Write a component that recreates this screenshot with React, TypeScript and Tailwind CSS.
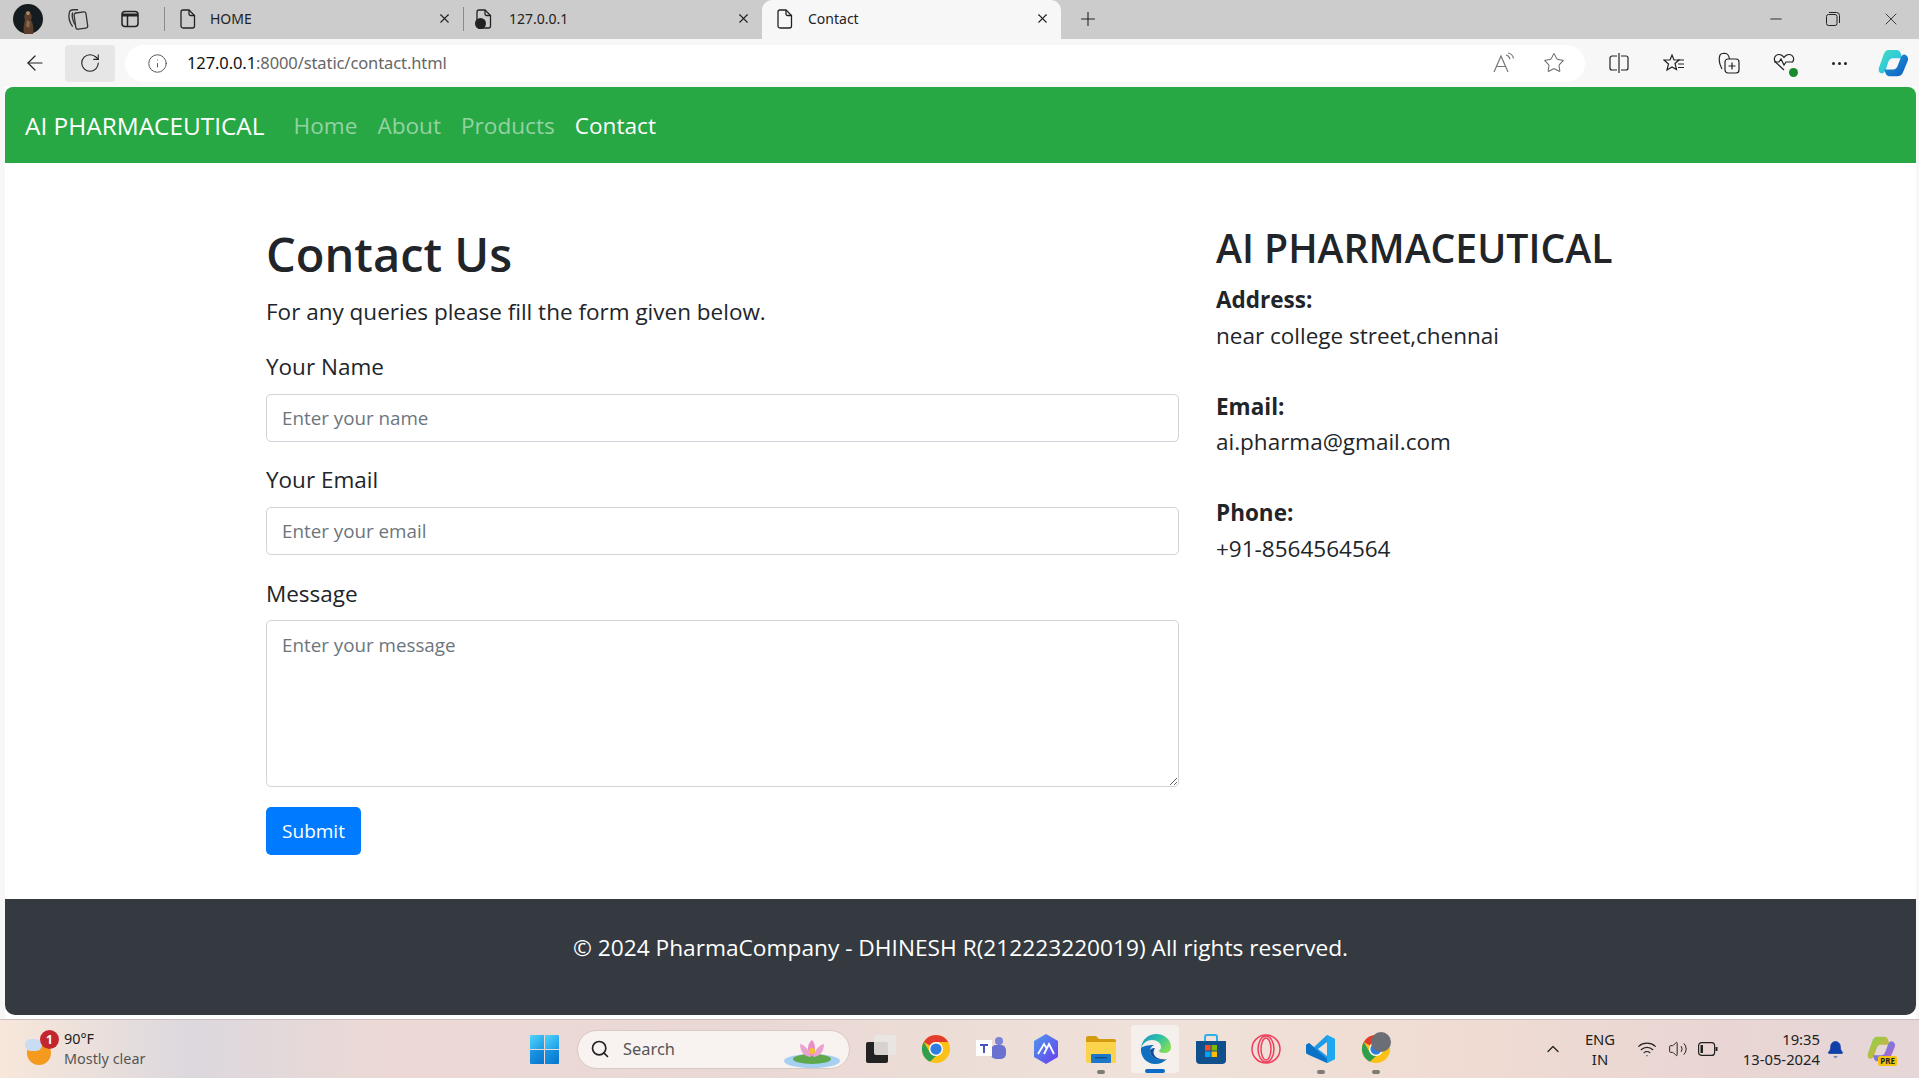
import { ArrowLeft, Bell, ChevronUp, Info, Minus, Plus, RotateCw, Search, Star, Volume2, Wifi, X } from "lucide-react";

const UI = "font-['Noto_Sans',sans-serif]";

function FileIcon() {
  return (
    <svg width="16" height="20" viewBox="0 0 16 20" fill="none" stroke="#222" strokeWidth="1.3">
      <path d="M3 1h6l5.500 5.500V17a2 2 0 0 1-2 2H3a2 2 0 0 1-2-2V3a2 2 0 0 1 2-2z" />
      <path d="M9 1v4a1.500 1.500 0 0 0 1.500 1.500h4" />
    </svg>
  );
}

function ChromeLogo({ size }: { size: number }) {
  return (
    <svg width={size} height={size} viewBox="0 0 32 32">
      <circle cx="16" cy="16" r="15" fill="#fbc116" />
      <path d="M16 1a15 15 0 0 1 13 7.500H16a7.500 7.500 0 0 0-6.500 3.750L3 8.500A15 15 0 0 1 16 1z" fill="#e33b2e" />
      <path d="M3 8.500l6.500 11.250A7.500 7.500 0 0 0 16 23.500L9.500 29.500A15 15 0 0 1 3 8.500z" fill="#2f9e4f" />
      <circle cx="16" cy="16" r="7.500" fill="#fff" />
      <circle cx="16" cy="16" r="6" fill="#2f7de1" />
    </svg>
  );
}

function EdgeLogo() {
  return (
    <svg width="32" height="32" viewBox="0 0 32 32">
      <defs>
        <linearGradient id="edgeTop" x1="0" y1="0" x2="1" y2="0.6">
          <stop offset="0" stopColor="#1a8fc9" />
          <stop offset="0.55" stopColor="#2fc3a5" />
          <stop offset="1" stopColor="#7fdc5a" />
        </linearGradient>
      </defs>
      <path d="M1 15C2 6 9 1 16 1c9 0 15 6 15 13 0 4-3 6-7 6-3 0-5-1-5-2 0-1 2-1 2-4 0-4-4-7-9-7-5 0-9 3-11 8z" fill="url(#edgeTop)" />
      <path d="M1 15c-1 9 6 16 14 16 5 0 9-2 12-5-2 1-4 1-6 1-6 0-11-4-11-9 0-3 2-5 4-6-6 0-11 1-13 3z" fill="#0f6fc0" />
      <path d="M10 18c0 5 5 9 11 9 2 0 4 0 6-1-3 1-10 0-12-3-2-2-2-5 0-8-3 0-5 1-5 3z" fill="#0a4f9a" />
    </svg>
  );
}

function WinLogo() {
  return (
    <svg width="29" height="29" viewBox="0 0 29 29">
      <defs>
        <linearGradient id="winA" x1="0" y1="0" x2="1" y2="1">
          <stop offset="0" stopColor="#52d4fb" />
          <stop offset="1" stopColor="#1a9ae6" />
        </linearGradient>
        <linearGradient id="winB" x1="0" y1="0" x2="1" y2="1">
          <stop offset="0" stopColor="#1c9be6" />
          <stop offset="1" stopColor="#0674ce" />
        </linearGradient>
      </defs>
      <path d="M1 0h13v14H0V1a1 1 0 0 1 1-1z" fill="url(#winA)" />
      <path d="M15 0h13a1 1 0 0 1 1 1v13H15z" fill="url(#winA)" />
      <path d="M0 15h14v14H1a1 1 0 0 1-1-1z" fill="url(#winB)" />
      <path d="M15 15h14v13a1 1 0 0 1-1 1H15z" fill="url(#winB)" />
    </svg>
  );
}

function CopilotLogo({ size, id, tone }: { size: number; id: string; tone: string[] }) {
  return (
    <svg width={size} height={size} viewBox="0 0 32 32">
      <defs>
        <linearGradient id={`${id}A`} x1="0" y1="0" x2="1" y2="1">
          <stop offset="0" stopColor={tone[0]} />
          <stop offset="1" stopColor={tone[1]} />
        </linearGradient>
        <linearGradient id={`${id}B`} x1="0" y1="0" x2="1" y2="1">
          <stop offset="0" stopColor={tone[2]} />
          <stop offset="1" stopColor={tone[3]} />
        </linearGradient>
      </defs>
      <path d="M11 2h9c2 0 3 1 4 3l2 6H16c-3 0-4 2-5 4l-3 9c-1 2-2 3-4 3-2 0-4-2-3-6L6 7c1-3 3-5 5-5z" fill={`url(#${id}B)`} />
      <path d="M21 30h-9c-2 0-3-1-4-3l-1-4h9c3 0 4-2 5-4l3-8c1-2 2-4 4-4s5 3 4 6l-5 12c-1 3-3 5-6 5z" fill={`url(#${id}A)`} />
    </svg>
  );
}

function TaskIcon({ children, active, dot }: { children: React.ReactNode; active?: boolean; dot?: boolean }) {
  return (
    <div className="relative flex h-[48px] w-[55px] shrink-0 items-center justify-center">
      {active && <div className="absolute left-[3px] top-0 h-[48px] w-[48px] rounded-[4px] bg-[#f5f0ec]" />}
      <div className="relative flex items-center justify-center">{children}</div>
      {dot && <div className="absolute bottom-[-1px] left-[24px] h-[4px] w-[8px] rounded-full bg-[#7d7a78]" />}
      {active && <div className="absolute bottom-[0px] left-[17px] h-[4px] w-[20px] rounded-full bg-[#0a6cc8]" />}
    </div>
  );
}

export default function App() {
  return (
    <div className={`flex h-[1078px] w-[1919px] flex-col overflow-hidden bg-[#f7f7f7] ${UI}`}>
      {/* tab strip */}
      <div className="flex h-[39px] shrink-0 items-center bg-[#cccccc] pb-[2px] text-[14px] text-[#222]">
        <div className="flex w-[56px] justify-center">
          <svg width="30" height="30" viewBox="0 0 30 30">
            <circle cx="15" cy="15" r="15" fill="#141c20" />
            <path d="M11 30c-1-6 0-11 1-14-1-2-1-4 0-6 1-3 5-3 6 0 1 2 1 4 0 6 2 3 3 8 2 14z" fill="#5b3f2c" />
            <path d="M13 8c1-1 3-1 4 0l-1 3h-2z" fill="#b08a68" />
            <path d="M14 16l3 2-1 6-3-2z" fill="#8a6a4c" />
          </svg>
        </div>
        <div className="flex w-[44px] justify-center pr-[3px]">
          <svg width="24" height="24" viewBox="0 0 22 22" fill="none" stroke="#333" strokeWidth="1.200">
            <rect x="9" y="5" width="11" height="15" rx="2" transform="rotate(-8 14 12)" />
            <path d="M7 18C4 14 3 9 4 5c.3-1.500 2-2.500 4-2.500h4" />
            <path d="M9 16C7 12 6 8 7 5" />
          </svg>
        </div>
        <div className="flex w-[60px] justify-center">
          <svg width="18" height="18" viewBox="0 0 18 18" fill="none" stroke="#222" strokeWidth="1.500">
            <rect x="1" y="1.500" width="16" height="15" rx="3" />
            <path d="M1 5h16" strokeWidth="3" />
            <path d="M6.500 5v11.500" />
          </svg>
        </div>
        <div className="ml-[4px] h-[24px] w-px bg-[#8a8a8a]" />
        <div className="flex w-[298px] items-center pl-[15px] pr-[11px]">
          <FileIcon />
          <span className="ml-[14px] flex-1">HOME</span>
          <X size={15} strokeWidth={1.700} />
        </div>
        <div className="h-[24px] w-px bg-[#8a8a8a]" />
        <div className="flex w-[298px] items-center pl-[12px] pr-[11px]">
          <div className="relative">
            <FileIcon />
            <div className="absolute bottom-[0px] left-[-1px] h-[11px] w-[11px] rounded-full bg-[#222]" />
          </div>
          <span className="ml-[17px] flex-1">127.0.0.1</span>
          <X size={15} strokeWidth={1.700} />
        </div>
        <div className="mb-[-2px] flex h-[39px] w-[299px] items-center self-end rounded-t-[10px] bg-[#f7f7f7] pb-[2px] pl-[15px] pr-[11px]">
          <FileIcon />
          <span className="ml-[15px] flex-1">Contact</span>
          <X size={15} strokeWidth={1.700} />
        </div>
        <Plus className="ml-[16px]" size={22} strokeWidth={1.200} />
        <div className="flex-1" />
        <Minus size={18} strokeWidth={1.200} className="mr-[41px]" />
        <svg width="14" height="14" viewBox="0 0 14 14" fill="none" stroke="#222" className="mr-[41px]">
          <rect x="0.500" y="2.500" width="10.500" height="11" rx="2" />
          <path d="M3 .500h7.500a3 3 0 0 1 3 3V11" />
        </svg>
        <X size={20} strokeWidth={1} className="mr-[18px]" />
      </div>

      {/* address bar row */}
      <div className="flex h-[48px] shrink-0 items-center text-[#222]">
        <div className="flex w-[65px] justify-center pl-[5px]">
          <ArrowLeft size={24} strokeWidth={1.200} />
        </div>
        <div className="flex h-[37px] w-[50px] items-center justify-center rounded-[4px] bg-[#e6e6e6]">
          <RotateCw size={22} strokeWidth={1.200} />
        </div>
        <div className="ml-[10px] flex h-[37px] w-[1460px] items-center rounded-full bg-white pl-[22px] pr-[20px]">
          <Info size={21} strokeWidth={1} color="#444" />
          <div className="ml-[19px] flex-1 text-[16.500px] tracking-[-0.1px] text-[#666]">
            <span className="text-[#111]">127.0.0.1</span>:8000/static/contact.html
          </div>
          <svg width="22" height="22" viewBox="0 0 22 22" fill="none" stroke="#777" strokeWidth="1.200" className="mr-[28px]">
            <path d="M1 20 8 4l7 16M3.500 14.500h9" />
            <path d="M13 3c2 .5 3.500 2 4 4M15 1c3 .5 5 3 5.500 5.500" />
          </svg>
          <Star size={22} strokeWidth={1.100} color="#666" />
        </div>
        <div className="flex flex-1 items-center pl-[24px]">
          <svg width="20" height="20" viewBox="0 0 20 20" fill="none" stroke="#222" strokeWidth="1.200">
            <path d="M8 3H3a2 2 0 0 0-2 2v10a2 2 0 0 0 2 2h5M12 3h5a2 2 0 0 1 2 2v10a2 2 0 0 1-2 2h-5M10 0v20" />
          </svg>
          <svg width="22" height="22" viewBox="0 0 22 22" fill="none" stroke="#222" strokeWidth="1.200" className="ml-[34px]">
            <path d="M9 3l2 5h5l-4 3.500 1.500 6L9 15l-5 3 1.500-6L1 8h6z" />
            <path d="M15 8h6M15 12h6M15 15.500h6" />
          </svg>
          <svg width="22" height="22" viewBox="0 0 22 22" fill="none" stroke="#222" strokeWidth="1.200" className="ml-[33px]">
            <rect x="7" y="7" width="14" height="14" rx="3" />
            <path d="M14 10.500v7M10.500 14h7" />
            <path d="M4 17C1 12 1 6 2 3c.5-1.500 4-2 6-1.500 2 .5 3 2.500 3.500 5.500" />
          </svg>
          <div className="relative ml-[33px] h-[22px] w-[22px]">
            <svg width="22" height="22" viewBox="0 0 22 22" fill="none" stroke="#222" strokeWidth="1.200">
              <path d="M11 18 2.500 10C0 7 2 2.500 6 2.500c2.500 0 4 1.500 5 3 1-1.500 2.500-3 5-3 4 0 6 4.500 3.500 7.500" />
              <path d="M1 10h5l2-3 3 6 2-3h7" />
            </svg>
            <div className="absolute bottom-[-3px] right-[-3px] h-[9px] w-[9px] rounded-full bg-[#1a8a2e]" />
          </div>
          <div className="ml-[37px] flex gap-[3px]">
            <div className="h-[3px] w-[3px] rounded-full bg-[#222]" />
            <div className="h-[3px] w-[3px] rounded-full bg-[#222]" />
            <div className="h-[3px] w-[3px] rounded-full bg-[#222]" />
          </div>
          <div className="ml-[31px]">
            <CopilotLogo size={30} id="copEdge" tone={["#1f9bd8", "#0f5cc0", "#3fe0c0", "#26b5f0"]} />
          </div>
        </div>
      </div>

      {/* page */}
      <div className="ml-[5px] mr-[3px] flex flex-1 flex-col bg-white font-['Open_Sans',sans-serif] text-[#212529]">
        <nav className="flex h-[76px] shrink-0 items-center rounded-t-[8px] bg-[#28a745] pl-[20px] pt-[2px] text-[24.400px]">
          <span className="text-white">AI PHARMACEUTICAL</span>
          <div className="ml-[29px] flex gap-[20px] text-[22.600px] text-[#93d3a2]">
            <span>Home</span>
            <span>About</span>
            <span>Products</span>
            <span className="text-white">Contact</span>
          </div>
        </nav>

        <main className="mx-auto flex h-[736px] w-[1425px] shrink-0 pt-[62px] text-[22.500px] leading-[30px]">
          <div className="w-[949px] px-[18px]">
            <h1 className="mb-[13px] mt-[-1px] text-[47px] font-semibold leading-[60px]">Contact Us</h1>
            <p className="mb-[25px]">For any queries please fill the form given below.</p>
            <label className="mb-[12px] block">Your Name</label>
            <input
              placeholder="Enter your name"
              className="mb-[23px] block h-[48px] w-full rounded-[5px] border border-[#ced4da] bg-white px-[15px] text-[18.800px] placeholder:text-[#6c757d]"
            />
            <label className="mb-[12px] block">Your Email</label>
            <input
              placeholder="Enter your email"
              className="mb-[24px] block h-[48px] w-full rounded-[5px] border border-[#ced4da] bg-white px-[15px] text-[18.800px] placeholder:text-[#6c757d]"
            />
            <label className="mb-[11px] block">Message</label>
            <textarea
              placeholder="Enter your message"
              className="mb-[20px] block h-[167px] w-full rounded-[5px] border border-[#ced4da] bg-white px-[15px] py-[9px] text-[18.800px] placeholder:text-[#6c757d]"
            />
            <button className="h-[48px] w-[95px] rounded-[5px] bg-[#007bff] text-[19px] text-white">Submit</button>
          </div>
          <div className="w-[476px] px-[19px]">
            <h2 className="mb-[10px] mt-[-1px] text-[39.200px] font-semibold leading-[48px]">AI PHARMACEUTICAL</h2>
            <p className="mb-[35.500px] leading-[35.500px]">
              <strong className="font-bold">Address:</strong>
              <br />
              near college street,chennai
            </p>
            <p className="mb-[35.500px] leading-[35.500px]">
              <strong className="font-bold">Email:</strong>
              <br />
              ai.pharma@gmail.com
            </p>
            <p className="leading-[35.500px]">
              <strong className="font-bold">Phone:</strong>
              <br />
              +91-8564564564
            </p>
          </div>
        </main>

        <footer className="flex h-[116px] shrink-0 items-start justify-center rounded-b-[10px] bg-[#343a40] pt-[31px] text-[22.700px] leading-[36px] text-white">
          © 2024 PharmaCompany - DHINESH R(212223220019) All rights reserved.
        </footer>
        <div className="flex-1" />
      </div>

      {/* windows taskbar */}
      <div className="flex h-[59px] shrink-0 items-center border-t border-[#c9c0bc] bg-[linear-gradient(90deg,#f8e7da_0%,#dcd8de_10%,#ecd9d5_20%,#ead8d4_40%,#efe2da_60%,#f0dcd2_75%,#e9d6d4_90%,#e6d6d8_100%)] text-[#222]">
        <div className="flex w-[517px] shrink-0 items-center pl-[24px]">
          <div className="relative h-[38px] w-[36px]">
            <div className="absolute bottom-[3px] left-[3px] h-[24px] w-[24px] rounded-full bg-[#f39a1f]" />
            <div className="absolute left-[1px] top-[9px] h-[12px] w-[17px] rounded-full bg-[#c9dcf4]" />
            <div className="absolute left-[16px] top-[0px] flex h-[19px] w-[19px] items-center justify-center rounded-full bg-[#c4262e] text-[12px] font-bold text-white">
              1
            </div>
          </div>
          <div className="ml-[4px] text-[14.400px] leading-[20px]">
            <div>90°F</div>
            <div className="text-[#555]">Mostly clear</div>
          </div>
        </div>
        <TaskIcon>
          <WinLogo />
        </TaskIcon>
        <div className="relative ml-[5px] flex h-[39px] w-[273px] shrink-0 items-center rounded-full border border-[#d8c8c4] bg-[#f8f2f0] pl-[12px]">
          <Search size={20} strokeWidth={2} color="#222" />
          <span className="ml-[13px] text-[16.400px] text-[#555]">Search</span>
          <svg width="58" height="30" viewBox="0 0 58 30" className="absolute bottom-[0px] right-[8px]">
            <ellipse cx="29" cy="23" rx="28" ry="7" fill="#a6d0f2" />
            <ellipse cx="29" cy="21" rx="19" ry="5" fill="#5fa84e" />
            <path d="M29 2c3 3 4 8 2 16h-5c-2-8-1-13 3-16z" fill="#e88fc6" />
            <path d="M17 6c5 1 9 6 11 13-6 0-11-5-11-13zM41 6c-5 1-9 6-11 13 6 0 11-5 11-13z" fill="#eaa2d0" />
            <circle cx="29" cy="13" r="3" fill="#f2c230" />
          </svg>
        </div>
        <div className="ml-[3px] flex items-center">
          <TaskIcon>
            <div className="relative h-[28px] w-[30px]">
              <div className="absolute bottom-0 left-0 h-[21px] w-[22px] rounded-[2px] bg-[#222]" />
              <div className="absolute right-0 top-0 h-[20px] w-[22px] rounded-[2px] bg-[#e9e5e3]/90" />
            </div>
          </TaskIcon>
          <TaskIcon>
            <ChromeLogo size={30} />
          </TaskIcon>
          <TaskIcon>
            <svg width="30" height="28" viewBox="0 0 30 28">
              <circle cx="23" cy="6" r="4" fill="#7b83d8" />
              <rect x="15" y="10" width="15" height="14" rx="5" fill="#6a72cf" />
              <rect x="0" y="5" width="16" height="16" fill="#fff" />
              <path d="M4 9h8v2H9v7H7v-7H4z" fill="#4b53bc" />
            </svg>
          </TaskIcon>
          <TaskIcon>
            <svg width="30" height="30" viewBox="0 0 30 30">
              <defs>
                <linearGradient id="hexA" x1="0" y1="0" x2="1" y2="1">
                  <stop offset="0" stopColor="#4c9bea" />
                  <stop offset="1" stopColor="#6a3cf0" />
                </linearGradient>
              </defs>
              <path d="M15 0l12 7v16l-12 7-12-7V7z" fill="url(#hexA)" />
              <path d="M7 20l6-10 3 5M13 20l5-10 5 10" fill="none" stroke="#fff" strokeWidth="1.800" />
            </svg>
          </TaskIcon>
          <TaskIcon dot>
            <svg width="30" height="28" viewBox="0 0 30 28">
              <path d="M0 3a2 2 0 0 1 2-2h8l3 3h15a2 2 0 0 1 2 2v4H0z" fill="#d49a10" />
              <path d="M0 7h30v19a2 2 0 0 1-2 2H2a2 2 0 0 1-2-2z" fill="#fbd34c" />
              <rect x="5" y="19" width="20" height="9" rx="1" fill="#1b78c8" />
              <rect x="9" y="22" width="12" height="1.500" fill="#0f4f90" />
            </svg>
          </TaskIcon>
          <TaskIcon active>
            <EdgeLogo />
          </TaskIcon>
          <TaskIcon>
            <svg width="30" height="30" viewBox="0 0 30 30">
              <path d="M9 7V3a2 2 0 0 1 2-2h8a2 2 0 0 1 2 2v4" fill="none" stroke="#2ab0ea" strokeWidth="2" />
              <path d="M0 7h30v19a4 4 0 0 1-4 4H4a4 4 0 0 1-4-4z" fill="#0f4f8c" />
              <rect x="9" y="11" width="5.500" height="5.500" fill="#f25022" />
              <rect x="15.500" y="11" width="5.500" height="5.500" fill="#7fba00" />
              <rect x="9" y="17.500" width="5.500" height="5.500" fill="#00a4ef" />
              <rect x="15.500" y="17.500" width="5.500" height="5.500" fill="#ffb900" />
            </svg>
          </TaskIcon>
          <TaskIcon>
            <svg width="30" height="30" viewBox="0 0 30 30" fill="none" stroke="#ef3e5c" strokeWidth="1.500">
              <circle cx="15" cy="15" r="14" />
              <ellipse cx="15" cy="15" rx="8" ry="13" />
              <ellipse cx="15" cy="15" rx="5" ry="11" />
            </svg>
          </TaskIcon>
          <TaskIcon dot>
            <svg width="30" height="30" viewBox="0 0 30 30">
              <path d="M21 1l8 4v20l-8 4-13-12-5 4-3-2V11l3-2 5 4z" fill="#1f9ce8" />
              <path d="M21 1v28l8-4V5z" fill="#1ea8f0" />
              <path d="M21 8l-9 7 9 7z" fill="#f0e2da" />
              <path d="M0 11l3-2 18 16v4L3 21 0 19z" fill="#0c72c8" />
            </svg>
          </TaskIcon>
          <TaskIcon dot>
            <ChromeLogo size={30} />
            <div className="absolute right-[0px] top-[-2px] h-[20px] w-[20px] rounded-full bg-[#6b6e74]" />
          </TaskIcon>
        </div>
        <div className="flex flex-1 items-center pl-[140px] text-[14.800px]">
          <ChevronUp size={20} strokeWidth={1.500} />
          <div className="ml-[13px] w-[48px] text-center leading-[20px]">
            ENG
            <br />
            IN
          </div>
          <Wifi size={20} strokeWidth={1.400} className="ml-[13px]" />
          <Volume2 size={20} strokeWidth={1.200} className="ml-[11px]" />
          <svg width="20" height="14" viewBox="0 0 20 14" fill="none" stroke="#222" strokeWidth="1.200" className="ml-[10px]">
            <rect x="0.600" y="0.600" width="16" height="12.800" rx="3" />
            <rect x="2.500" y="3" width="2.500" height="8" fill="#222" stroke="none" />
            <path d="M18.500 5v4" strokeWidth="2" />
          </svg>
          <div className="ml-[20px] w-[82px] text-right leading-[20px]">
            19:35
            <br />
            13-05-2024
          </div>
          <Bell size={19} strokeWidth={1} color="#0f3fa8" fill="#0f3fa8" className="ml-[6px]" />
          <div className="relative ml-[22px]">
            <CopilotLogo size={28} id="copTask" tone={["#2f8fe8", "#d85ac8", "#7fd84a", "#f0a040"]} />
            <div className="absolute bottom-[-3px] right-[-2px] rounded-[2px] bg-[#f3c313] px-[2px] text-[8px] font-bold leading-[10px] text-[#222]">
              PRE
            </div>
          </div>
        </div>
      </div>
    </div>
  );
}
